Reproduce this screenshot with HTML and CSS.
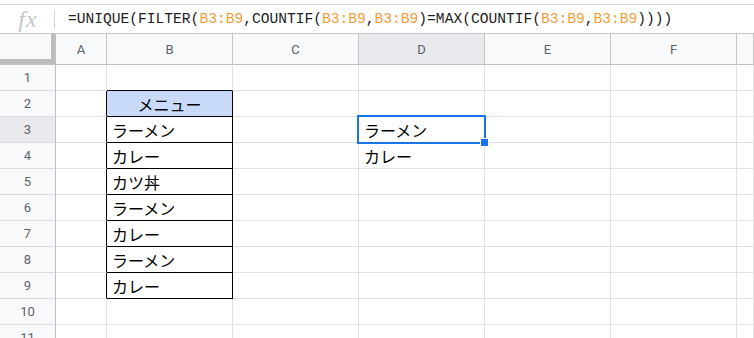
FILE: index.html
```html
<!DOCTYPE html>
<html lang="ja">
<head>
<meta charset="utf-8">
<link rel="stylesheet" href="styles.css">
</head>
<body>
<div class="app">
  <div class="topedge"></div>
  <div class="formula-bar">
    <div class="fx"><span class="fx-glyph">fx</span></div>
    <div class="fx-sep"></div>
    <div class="formula">=UNIQUE(FILTER(<span class="ref">B3:B9</span>,COUNTIF(<span class="ref">B3:B9</span>,<span class="ref">B3:B9</span>)=MAX(COUNTIF(<span class="ref">B3:B9</span>,<span class="ref">B3:B9</span>))))</div>
  </div>
  <div class="sheet">
    <div class="corner"></div>
    <div class="colhead">A</div>
    <div class="colhead">B</div>
    <div class="colhead">C</div>
    <div class="colhead sel">D</div>
    <div class="colhead">E</div>
    <div class="colhead">F</div>
    <div class="colhead"></div>

    <div class="rowhead">1</div>
    <div class="cell"></div><div class="cell above-table"></div><div class="cell"></div><div class="cell"></div><div class="cell"></div><div class="cell"></div><div class="cell"></div>

    <div class="rowhead">2</div>
    <div class="cell left-of-table"></div><div class="cell tbl tbl-head">メニュー</div><div class="cell"></div><div class="cell"></div><div class="cell"></div><div class="cell"></div><div class="cell"></div>

    <div class="rowhead sel">3</div>
    <div class="cell left-of-table"></div><div class="cell tbl">ラーメン</div><div class="cell"></div><div class="cell selected">ラーメン<span class="sel-box"><span class="sel-handle"></span></span></div><div class="cell"></div><div class="cell"></div><div class="cell"></div>

    <div class="rowhead">4</div>
    <div class="cell left-of-table"></div><div class="cell tbl">カレー</div><div class="cell"></div><div class="cell">カレー</div><div class="cell"></div><div class="cell"></div><div class="cell"></div>

    <div class="rowhead">5</div>
    <div class="cell left-of-table"></div><div class="cell tbl">カツ丼</div><div class="cell"></div><div class="cell"></div><div class="cell"></div><div class="cell"></div><div class="cell"></div>

    <div class="rowhead">6</div>
    <div class="cell left-of-table"></div><div class="cell tbl">ラーメン</div><div class="cell"></div><div class="cell"></div><div class="cell"></div><div class="cell"></div><div class="cell"></div>

    <div class="rowhead">7</div>
    <div class="cell left-of-table"></div><div class="cell tbl">カレー</div><div class="cell"></div><div class="cell"></div><div class="cell"></div><div class="cell"></div><div class="cell"></div>

    <div class="rowhead">8</div>
    <div class="cell left-of-table"></div><div class="cell tbl">ラーメン</div><div class="cell"></div><div class="cell"></div><div class="cell"></div><div class="cell"></div><div class="cell"></div>

    <div class="rowhead">9</div>
    <div class="cell left-of-table"></div><div class="cell tbl">カレー</div><div class="cell"></div><div class="cell"></div><div class="cell"></div><div class="cell"></div><div class="cell"></div>

    <div class="rowhead">10</div>
    <div class="cell"></div><div class="cell"></div><div class="cell"></div><div class="cell"></div><div class="cell"></div><div class="cell"></div><div class="cell"></div>

    <div class="rowhead">11</div>
    <div class="cell"></div><div class="cell"></div><div class="cell"></div><div class="cell"></div><div class="cell"></div><div class="cell"></div><div class="cell"></div>
  </div>
</div>
</body>
</html>
```
FILE: styles.css
```css
* { box-sizing: border-box; }
html, body { margin: 0; padding: 0; background: #fff; }
.app {
  width: 754px;
  height: 338px;
  overflow: hidden;
  font-family: Roboto, "Liberation Sans", Arial, sans-serif;
}
.topedge {
  height: 5px;
  border-bottom: 1px solid #dadce0;
}
.formula-bar {
  height: 29px;
  border-bottom: 1px solid #c4c7c5;
  display: flex;
  align-items: center;
}
.fx {
  width: 54px;
  display: flex;
  justify-content: center;
  align-items: center;
}
.fx-glyph {
  font-family: "Liberation Serif", "DejaVu Serif", serif;
  font-style: italic;
  font-size: 24px;
  color: #c4c7c5;
  letter-spacing: 1px;
  line-height: 1;
  margin-left: 2px;
}
.fx-sep {
  width: 1px;
  height: 19px;
  background: #d5d7d9;
}
.formula {
  margin-left: 13px;
  font-family: "Liberation Mono", "DejaVu Sans Mono", monospace;
  font-size: 14.6px;
  color: #202124;
  white-space: nowrap;
  line-height: 1;
}
.ref { color: #f29e3a; }

.sheet {
  display: grid;
  grid-template-columns: 56px 51px repeat(5, 126px) 1fr;
  grid-template-rows: 31px repeat(11, 26px);
}
.corner, .colhead, .rowhead, .cell {
  border-right: 1px solid #e2e2e2;
  border-bottom: 1px solid #e2e2e2;
}
.corner {
  background: #f8f9fa;
  border-right-color: #c0c0c0;
  border-bottom-color: #c0c0c0;
  box-shadow: inset -4px 0 0 #bdbdbd, inset 0 -5px 0 #bdbdbd;
}
.colhead {
  background: #f8f9fa;
  border-right-color: #c4c7c5;
  border-bottom-color: #c0c0c0;
  display: flex;
  align-items: center;
  justify-content: center;
  font-size: 13px;
  color: #5f6368;
}
.rowhead {
  background: #f8f9fa;
  border-right-color: #c0c0c0;
  border-bottom-color: #dadce0;
  display: flex;
  align-items: center;
  justify-content: center;
  font-size: 13px;
  color: #5f6368;
}
.colhead.sel, .rowhead.sel { background: #e8eaed; }

.cell {
  font-family: "Noto Sans CJK JP", "Noto Sans", sans-serif;
  font-size: 16px;
  color: #000;
  padding-left: 5px;
  display: flex;
  align-items: center;
  white-space: nowrap;
  line-height: 1;
}
.above-table { border-bottom-color: #000; }
.left-of-table { border-right-color: #000; }
.tbl { border-right-color: #000; border-bottom-color: #000; }
.tbl-head {
  background: #c9daf8;
  justify-content: center;
  padding-left: 0;
}
.selected { position: relative; }
.sel-box {
  position: absolute;
  top: -2px; left: -2px; right: -2px; bottom: -2px;
  border: 2px solid #1a73e8;
}
.sel-handle {
  position: absolute;
  right: -5px;
  bottom: -5px;
  width: 9px;
  height: 9px;
  background: #1a73e8;
  border: 1px solid #fff;
}
```
